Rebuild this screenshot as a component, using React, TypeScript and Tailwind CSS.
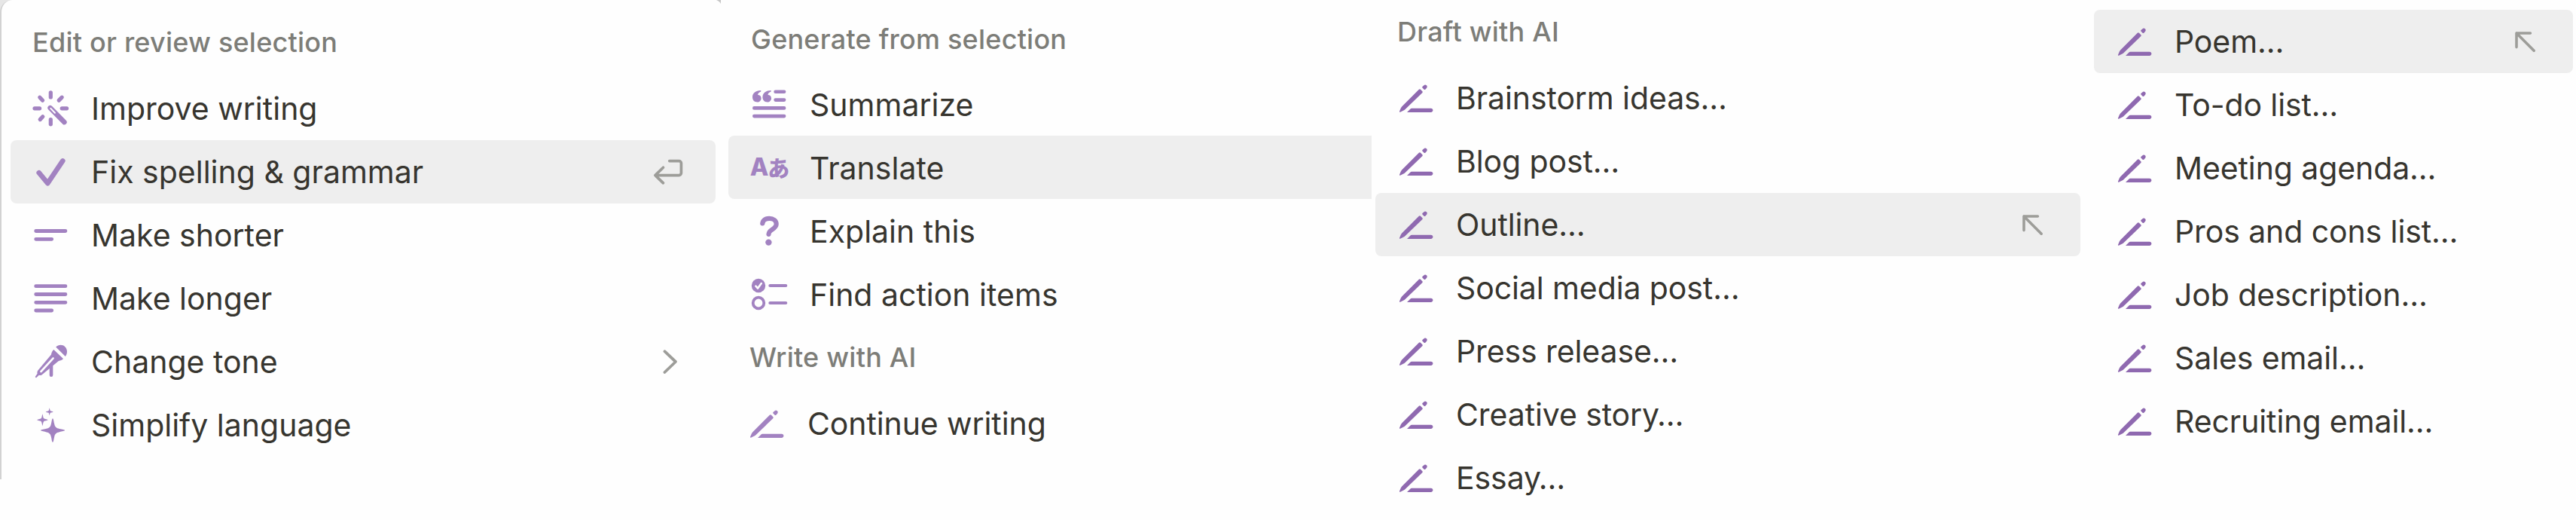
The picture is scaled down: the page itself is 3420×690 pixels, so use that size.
import type { ReactNode } from 'react';
import clsx from 'clsx';

type IconProps = { children: ReactNode; className?: string };

function Icon({ children, className }: IconProps) {
  return (
    <svg
      viewBox="0 0 48 48"
      fill="none"
      stroke="currentColor"
      strokeLinecap="round"
      strokeLinejoin="round"
      className={clsx('size-12 shrink-0 overflow-visible', className)}
    >
      {children}
    </svg>
  );
}

const WandIcon = () => (
  <Icon>
    <path
      strokeWidth="5.2"
      d="M24.3 2.8v6.2M24.3 38.6v6.2M3 23.8h6.6M39.2 23.8h6.4M9.8 9.2l3.8 4M39.2 9.2l-4 4M10.2 38.6l3.6-3.8"
    />
    <path strokeWidth="6.6" d="M23.6 23.2l18.8 18.9" />
    <path className="stroke-[#fefefe]" strokeWidth="2" d="M24.3 23.9l5.6 5.8" />
  </Icon>
);

const CheckIcon = () => (
  <Icon>
    <path strokeWidth="6.6" d="M8.7 25.2L20.3 39.2L40.3 9.4" />
  </Icon>
);

const ShorterIcon = () => (
  <Icon>
    <path strokeWidth="4.8" d="M4.7 18.5h39.2M4.7 29.3h21" />
  </Icon>
);

const LongerIcon = () => (
  <Icon>
    <path strokeWidth="4.8" d="M4.7 7.7h39.2M4.7 18.5h39.2M4.7 29.3h39.2M4.7 40h21" />
  </Icon>
);

const MicIcon = () => (
  <Icon>
    <path
      fill="currentColor"
      stroke="none"
      d="M31.2 4.6C34.4 1 40 .8 43.4 4.2c3.4 3.4 3.4 9 .4 12.8zM28.4 8l12.6 12c-1.6 2-3.8 2.4-6.2 2.9L12.4 41.6c-1.2.7-2.6.6-3.6.2L5.4 45c-.8.6-2-.4-1.4-1.4l2.6-3.8c-.4-1.4-.2-2.8.8-4.2L25 14.4c.4-2.4 1.2-4.8 3.4-6.4z"
    />
    <path className="stroke-[#fefefe]" strokeWidth="2.6" d="M27.6 19.4L11.4 37" />
    <path strokeWidth="4.6" d="M25 29.5v12.3" />
  </Icon>
);

const SparklesIcon = () => (
  <Icon>
    <g fill="currentColor" stroke="none">
      <path d="M27 15.2c.9 0 1.2 3.2 2 6.8 1 4.6 2.4 6 7 7 3.6.8 7.2 1.2 7.2 2.1s-3.6 1.3-7.2 2.1c-4.6 1-6 2.4-7 7-.8 3.6-1.1 6.6-2 6.6s-1.2-3-2-6.6c-1-4.6-2.4-6-7-7-3.6-.8-7-1.2-7-2.1s3.4-1.3 7-2.1c4.6-1 6-2.4 7-7 .8-3.6 1.1-6.8 2-6.8z" />
      <path d="M13.4 9.2c.9 2.8.8 5.8 2.2 6.4 1.4.6 3.4.6 5.2 1.6-1.8 1-3.8.9-5.2 1.6-1.4.7-1.3 3.6-2.2 6.4-.9-2.8-.8-5.7-2.2-6.4-1.4-.7-3.4-.6-5.2-1.6 1.8-1 3.8-1 5.2-1.6 1.4-.6 1.3-3.6 2.2-6.4z" />
      <path d="M22.7 1.3c.6 1.8.6 3.5 1.5 3.9.9.4 2.3.4 3.5 1.2-1.2.8-2.6.8-3.5 1.2-.9.4-.9 2.1-1.5 3.9-.6-1.8-.6-3.5-1.5-3.9-.9-.4-2.3-.4-3.5-1.2 1.2-.8 2.6-.8 3.5-1.2.9-.4.9-2.1 1.5-3.9z" />
    </g>
  </Icon>
);

const SummarizeIcon = () => (
  <Icon>
    <path
      fill="currentColor"
      stroke="none"
      d="M12.6 6c1 0 1.2 1.2.2 1.7-2 .9-3.4 2.1-3.8 4 2.7.1 4.6 2 4.6 4.7 0 2.9-2.2 5-5.1 5-4 0-6.5-2.6-6.5-6.7C2 9.6 6.5 6 12.6 6zM26 6c1 0 1.2 1.2.2 1.7-2 .9-3.4 2.1-3.8 4 2.7.1 4.6 2 4.6 4.7 0 2.9-2.2 5-5.1 5-4 0-6.5-2.6-6.5-6.7C15.4 9.6 19.9 6 26 6z"
    />
    <path strokeWidth="4.6" d="M32.6 7.7h11.5M32.6 18.6h11.5M4.3 29.4h39.8M4.3 40.1h39.8" />
  </Icon>
);

const TranslateIcon = () => (
  <span className="flex size-12 shrink-0 items-center justify-center pl-0.5 leading-none">
    <span className="font-['Inter',sans-serif] text-[32px] font-extrabold">A</span>
    <span className="-ml-px font-['Noto_Sans_CJK_JP',sans-serif] text-[29px] font-black">あ</span>
  </span>
);

const QuestionIcon = () => (
  <Icon>
    <path
      strokeWidth="6.2"
      d="M15.3 14.4C15.8 10.2 19.4 7.8 24.3 7.8c5.4 0 9.4 2.9 9.4 7.5 0 7.2-10.2 6.7-10.2 13.5"
    />
    <circle cx="23.4" cy="39.6" r="4.2" fill="currentColor" stroke="none" />
  </Icon>
);

const ActionItemsIcon = () => (
  <Icon>
    <circle cx="10" cy="13" r="9.2" fill="currentColor" stroke="none" />
    <path className="stroke-[#fefefe]" strokeWidth="2.6" d="M6.4 13.6l2.7 3L13.8 10" />
    <circle cx="10" cy="36" r="7.3" strokeWidth="3.8" />
    <path strokeWidth="4.2" d="M25.4 13h20.8M25.4 36h20.8" />
  </Icon>
);

const PenIcon = ({ className }: { className?: string }) => (
  <Icon className={className}>
    <g fill="currentColor" stroke="none">
      <path d="M27.8 12.8c.7-.7 1.5-.7 2.2 0l2.2 2.2c.7.7.7 1.5 0 2.2L9.4 39.3c-.6.6-1.2.9-1.9 1.2l-4.5 2.2c-.7.3-1.2-.2-1-.9l1.9-4.5c.3-.7.7-1.3 1.2-1.9z" />
      <path d="M34.2 7.5c1.2-1.2 2.6-1.1 3.7-.2 1.1 1.1 1.1 2.5 0 3.7l-1.4 1.5c-.7.7-1.4.7-2.1 0l-1.7-1.7c-.7-.7-.7-1.4 0-2.1z" />
      <path d="M12 42.9l4.5-4.5c.5-.5 1.1-.7 1.8-.7h25.4c1.7 0 2.7 1.1 2.7 2.6s-1 2.6-2.7 2.6z" />
    </g>
  </Icon>
);

const EnterIcon = () => (
  <Icon>
    <path
      strokeWidth="3.7"
      d="M24.8 9.6h12.6a3 3 0 0 1 3 3v13a3 3 0 0 1-3 3H6M16.5 18.2L5.9 28.6l10.6 10.2"
    />
  </Icon>
);

const ChevronIcon = () => (
  <Icon>
    <path strokeWidth="3.8" d="M18.4 10.2L33 24L18.4 38" />
  </Icon>
);

const ArrowIcon = () => (
  <Icon>
    <path strokeWidth="3.6" d="M29.4 13H11v18.6M11 13l23.2 23.2" />
  </Icon>
);

type Item = {
  label: string;
  icon: ReactNode;
  trailing?: ReactNode;
  active?: boolean;
};

const editItems: Item[] = [
  { label: 'Improve writing', icon: <WandIcon /> },
  { label: 'Fix spelling & grammar', icon: <CheckIcon />, trailing: <EnterIcon />, active: true },
  { label: 'Make shorter', icon: <ShorterIcon /> },
  { label: 'Make longer', icon: <LongerIcon /> },
  { label: 'Change tone', icon: <MicIcon />, trailing: <ChevronIcon /> },
  { label: 'Simplify language', icon: <SparklesIcon /> },
];

const generateItems: Item[] = [
  { label: 'Summarize', icon: <SummarizeIcon /> },
  { label: 'Translate', icon: <TranslateIcon />, active: true },
  { label: 'Explain this', icon: <QuestionIcon /> },
  { label: 'Find action items', icon: <ActionItemsIcon /> },
];

const draftPen = <PenIcon className="text-[#8f69b0]" />;

const draftItems: Item[] = [
  { label: 'Brainstorm ideas…', icon: draftPen },
  { label: 'Blog post…', icon: draftPen },
  { label: 'Outline…', icon: draftPen, trailing: <ArrowIcon />, active: true },
  { label: 'Social media post…', icon: draftPen },
  { label: 'Press release…', icon: draftPen },
  { label: 'Creative story…', icon: draftPen },
  { label: 'Essay…', icon: draftPen },
];

const moreDraftItems: Item[] = [
  { label: 'Poem…', icon: draftPen, trailing: <ArrowIcon />, active: true },
  { label: 'To-do list…', icon: draftPen },
  { label: 'Meeting agenda…', icon: draftPen },
  { label: 'Pros and cons list…', icon: draftPen },
  { label: 'Job description…', icon: draftPen },
  { label: 'Sales email…', icon: draftPen },
  { label: 'Recruiting email…', icon: draftPen },
];

function Heading({ children, className }: { children: ReactNode; className?: string }) {
  return (
    <h2
      className={clsx(
        'flex items-center whitespace-nowrap text-[36px] font-medium leading-none tracking-[0.22px] text-[#7d7d78]',
        className,
      )}
    >
      {children}
    </h2>
  );
}

type MenuListProps = { items: Item[]; itemClassName?: string; labelClassName?: string };

function MenuList({ items, itemClassName = 'pl-[30px]', labelClassName = 'ml-[29px]' }: MenuListProps) {
  return (
    <ul>
      {items.map((item) => (
        <li
          key={item.label}
          className={clsx(
            'flex h-[84px] items-center rounded-[8px] pr-[38px] text-[#a282c1]',
            item.active && 'bg-[#eeeeee]',
            itemClassName,
          )}
        >
          {item.icon}
          <span
            className={clsx(
              'flex-1 whitespace-nowrap text-[41px] leading-none text-[#37352f]',
              labelClassName,
            )}
          >
            {item.label}
          </span>
          {item.trailing && <span className="text-[#9d9d99]">{item.trailing}</span>}
        </li>
      ))}
    </ul>
  );
}

export default function App() {
  return (
    <main className="flex h-[690px] w-[3420px] overflow-hidden bg-[#fefefe] font-['Inter',sans-serif]">
      <section className="relative h-[636px] w-[957px] shrink-0 bg-[#e6e6e6]">
        <div className="h-full rounded-tl-[16px] border-l-2 border-[#d2d2d2] bg-[#fefefe] pl-3 pr-[7px] pt-2.5">
          <Heading className="h-[92px] pl-[29px]">Edit or review selection</Heading>
          <MenuList items={editItems} itemClassName="pl-[29px]" labelClassName="ml-[30px]" />
        </div>
        <svg viewBox="0 0 6 5" className="absolute right-0 top-0 h-[5px] w-[6px]">
          <path d="M0 0h6v5C5 3 3 1 0 0z" fill="#c6c6c6" />
        </svg>
      </section>

      <section className="w-[864px] shrink-0 pl-2.5 pt-[7px]">
        <Heading className="h-[89px] pl-[30px]">Generate from selection</Heading>
        <MenuList
          items={generateItems}
          itemClassName="rounded-r-none pl-[30px]"
          labelClassName="ml-[30px] pt-0.5"
        />
        <Heading className="mb-1 h-[84px] pl-[28px]">Write with AI</Heading>
        <MenuList
          items={[{ label: 'Continue writing', icon: <PenIcon /> }]}
          itemClassName="pl-[27px]"
          labelClassName="ml-[30px] tracking-[-0.1px]"
        />
      </section>

      <section className="w-[941px] shrink-0 pl-[5px]">
        <Heading className="mb-1 h-[84px] pl-[29px]">Draft with AI</Heading>
        <MenuList items={draftItems} labelClassName="ml-[29px] tracking-[-0.1px]" />
      </section>

      <section className="w-[654px] shrink-0 pl-[18px] pt-[13px]">
        <MenuList items={moreDraftItems} labelClassName="ml-[29px] tracking-[-0.1px]" />
      </section>
    </main>
  );
}
